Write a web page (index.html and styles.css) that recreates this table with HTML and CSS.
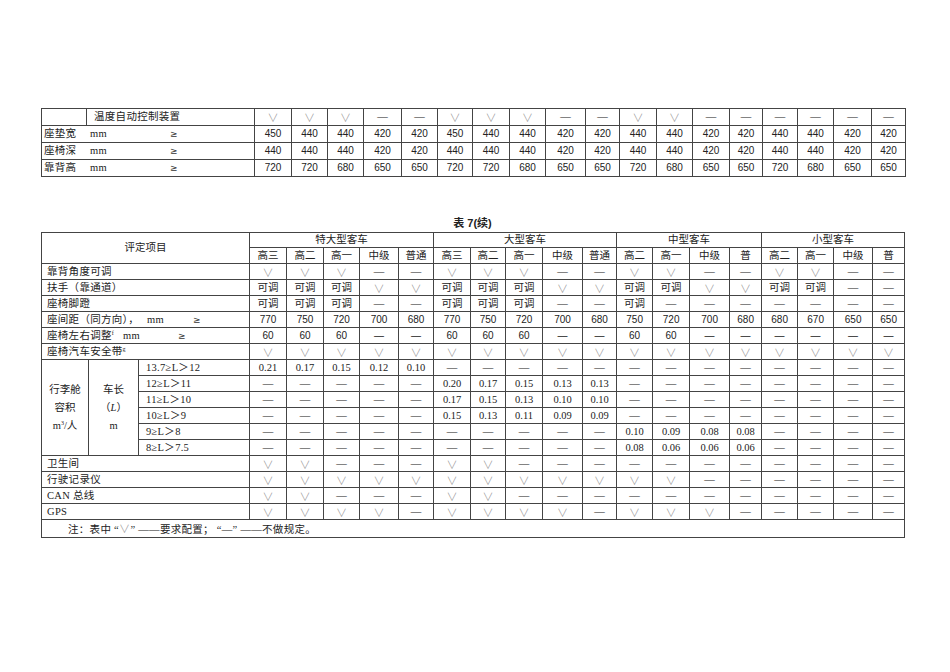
FILE: index.html
```html
<!DOCTYPE html>
<html lang="zh">
<head>
<meta charset="utf-8">
<title>表 7(续)</title>
<link rel="stylesheet" href="styles.css">
</head>
<body>
<div class="page">
<table class="grid top">
<colgroup>
<col style="width:45px"><col style="width:168px">
<col style="width:37px"><col style="width:36px"><col style="width:36px"><col style="width:38px"><col style="width:36px"><col style="width:35px"><col style="width:37px"><col style="width:36px"><col style="width:40px"><col style="width:34px"><col style="width:37px"><col style="width:36px"><col style="width:37px"><col style="width:33px"><col style="width:35px"><col style="width:36px"><col style="width:38px"><col style="width:34px">
</colgroup>
<tr><td></td><td class="lbl pad7">温度自动控制装置</td><td class="ck">∨</td><td class="ck">∨</td><td class="ck">∨</td><td>—</td><td>—</td><td class="ck">∨</td><td class="ck">∨</td><td class="ck">∨</td><td>—</td><td>—</td><td class="ck">∨</td><td class="ck">∨</td><td>—</td><td>—</td><td>—</td><td>—</td><td>—</td><td>—</td></tr>
<tr class="sans"><td colspan="2" class="lbl"><span class="nm">座垫宽</span><span class="mm">mm</span><span class="ge">≥</span></td><td>450</td><td>440</td><td>440</td><td>420</td><td>420</td><td>450</td><td>440</td><td>440</td><td>420</td><td>420</td><td>440</td><td>440</td><td>420</td><td>420</td><td>440</td><td>440</td><td>420</td><td>420</td></tr>
<tr class="sans"><td colspan="2" class="lbl"><span class="nm">座椅深</span><span class="mm">mm</span><span class="ge">≥</span></td><td>440</td><td>440</td><td>440</td><td>420</td><td>420</td><td>440</td><td>440</td><td>440</td><td>420</td><td>420</td><td>440</td><td>440</td><td>420</td><td>420</td><td>440</td><td>440</td><td>420</td><td>420</td></tr>
<tr class="sans"><td colspan="2" class="lbl"><span class="nm">靠背高</span><span class="mm">mm</span><span class="ge">≥</span></td><td>720</td><td>720</td><td>680</td><td>650</td><td>650</td><td>720</td><td>720</td><td>680</td><td>650</td><td>650</td><td>720</td><td>680</td><td>650</td><td>650</td><td>720</td><td>680</td><td>650</td><td>650</td></tr>
</table>

<div class="title">表 7(续)</div>

<table class="grid bottom">
<colgroup>
<col style="width:47px"><col style="width:50px"><col style="width:111px">
<col style="width:37px"><col style="width:37px"><col style="width:36px"><col style="width:39px"><col style="width:35px"><col style="width:37px"><col style="width:35px"><col style="width:37px"><col style="width:40px"><col style="width:34px"><col style="width:36px"><col style="width:37px"><col style="width:40px"><col style="width:32px"><col style="width:36px"><col style="width:36px"><col style="width:39px"><col style="width:32px">
</colgroup>
<tr class="h1"><td colspan="3" rowspan="2" class="head">评定项目</td><td colspan="5">特大型客车</td><td colspan="5">大型客车</td><td colspan="4">中型客车</td><td colspan="4">小型客车</td></tr>
<tr class="h2"><td>高三</td><td>高二</td><td>高一</td><td>中级</td><td>普通</td><td>高三</td><td>高二</td><td>高一</td><td>中级</td><td>普通</td><td>高二</td><td>高一</td><td>中级</td><td>普</td><td>高二</td><td>高一</td><td>中级</td><td>普</td></tr>
<tr><td colspan="3" class="lbl pad5">靠背角度可调</td><td class="ck">∨</td><td class="ck">∨</td><td class="ck">∨</td><td>—</td><td>—</td><td class="ck">∨</td><td class="ck">∨</td><td class="ck">∨</td><td>—</td><td>—</td><td class="ck">∨</td><td class="ck">∨</td><td>—</td><td>—</td><td class="ck">∨</td><td class="ck">∨</td><td>—</td><td>—</td></tr>
<tr><td colspan="3" class="lbl pad5">扶手（靠通道）</td><td>可调</td><td>可调</td><td>可调</td><td class="ck">∨</td><td class="ck">∨</td><td>可调</td><td>可调</td><td>可调</td><td class="ck">∨</td><td class="ck">∨</td><td>可调</td><td>可调</td><td class="ck">∨</td><td class="ck">∨</td><td>可调</td><td>可调</td><td>—</td><td>—</td></tr>
<tr><td colspan="3" class="lbl pad5">座椅脚蹬</td><td>可调</td><td>可调</td><td>可调</td><td>—</td><td>—</td><td>可调</td><td>可调</td><td>可调</td><td>—</td><td>—</td><td>可调</td><td>—</td><td>—</td><td>—</td><td>—</td><td>—</td><td>—</td><td>—</td></tr>
<tr class="sans"><td colspan="3" class="lbl pad5"><span class="w1">座间距（同方向），</span><span class="mm2">mm</span><span class="ge">≥</span></td><td>770</td><td>750</td><td>720</td><td>700</td><td>680</td><td>770</td><td>750</td><td>720</td><td>700</td><td>680</td><td>750</td><td>720</td><td>700</td><td>680</td><td>680</td><td>670</td><td>650</td><td>650</td></tr>
<tr class="sans"><td colspan="3" class="lbl pad5"><span class="w2">座椅左右调整<sup>f</sup></span><span class="mm3">mm</span><span class="ge">≥</span></td><td>60</td><td>60</td><td>60</td><td>—</td><td>—</td><td>60</td><td>60</td><td>60</td><td>—</td><td>—</td><td>60</td><td>60</td><td>—</td><td>—</td><td>—</td><td>—</td><td>—</td><td>—</td></tr>
<tr><td colspan="3" class="lbl pad5">座椅汽车安全带<sup>g</sup></td><td class="ck">∨</td><td class="ck">∨</td><td class="ck">∨</td><td class="ck">∨</td><td class="ck">∨</td><td class="ck">∨</td><td class="ck">∨</td><td class="ck">∨</td><td class="ck">∨</td><td class="ck">∨</td><td class="ck">∨</td><td class="ck">∨</td><td class="ck">∨</td><td class="ck">∨</td><td class="ck">∨</td><td class="ck">∨</td><td class="ck">∨</td><td class="ck">∨</td></tr>
<tr><td rowspan="6" class="stack">行李舱<br>容积<br>m<sup>3</sup>/人</td><td rowspan="6" class="stack">车长<br>（<i>L</i>）<br>m</td><td class="lbl pad7">13.7≥L＞12</td><td>0.21</td><td>0.17</td><td>0.15</td><td>0.12</td><td>0.10</td><td>—</td><td>—</td><td>—</td><td>—</td><td>—</td><td>—</td><td>—</td><td>—</td><td>—</td><td>—</td><td>—</td><td>—</td><td>—</td></tr>
<tr><td class="lbl pad7">12≥L＞11</td><td>—</td><td>—</td><td>—</td><td>—</td><td>—</td><td>0.20</td><td>0.17</td><td>0.15</td><td>0.13</td><td>0.13</td><td>—</td><td>—</td><td>—</td><td>—</td><td>—</td><td>—</td><td>—</td><td>—</td></tr>
<tr><td class="lbl pad7">11≥L＞10</td><td>—</td><td>—</td><td>—</td><td>—</td><td>—</td><td>0.17</td><td>0.15</td><td>0.13</td><td>0.10</td><td>0.10</td><td>—</td><td>—</td><td>—</td><td>—</td><td>—</td><td>—</td><td>—</td><td>—</td></tr>
<tr><td class="lbl pad7">10≥L＞9</td><td>—</td><td>—</td><td>—</td><td>—</td><td>—</td><td>0.15</td><td>0.13</td><td>0.11</td><td>0.09</td><td>0.09</td><td>—</td><td>—</td><td>—</td><td>—</td><td>—</td><td>—</td><td>—</td><td>—</td></tr>
<tr><td class="lbl pad7">9≥L＞8</td><td>—</td><td>—</td><td>—</td><td>—</td><td>—</td><td>—</td><td>—</td><td>—</td><td>—</td><td>—</td><td>0.10</td><td>0.09</td><td>0.08</td><td>0.08</td><td>—</td><td>—</td><td>—</td><td>—</td></tr>
<tr><td class="lbl pad7">8≥L＞7.5</td><td>—</td><td>—</td><td>—</td><td>—</td><td>—</td><td>—</td><td>—</td><td>—</td><td>—</td><td>—</td><td>0.08</td><td>0.06</td><td>0.06</td><td>0.06</td><td>—</td><td>—</td><td>—</td><td>—</td></tr>
<tr><td colspan="3" class="lbl pad5">卫生间</td><td class="ck">∨</td><td class="ck">∨</td><td>—</td><td>—</td><td>—</td><td class="ck">∨</td><td class="ck">∨</td><td>—</td><td>—</td><td>—</td><td>—</td><td>—</td><td>—</td><td>—</td><td>—</td><td>—</td><td>—</td><td>—</td></tr>
<tr><td colspan="3" class="lbl pad5">行驶记录仪</td><td class="ck">∨</td><td class="ck">∨</td><td class="ck">∨</td><td class="ck">∨</td><td class="ck">∨</td><td class="ck">∨</td><td class="ck">∨</td><td class="ck">∨</td><td class="ck">∨</td><td class="ck">∨</td><td class="ck">∨</td><td class="ck">∨</td><td>—</td><td>—</td><td>—</td><td>—</td><td>—</td><td>—</td></tr>
<tr><td colspan="3" class="lbl pad5">CAN 总线</td><td class="ck">∨</td><td class="ck">∨</td><td>—</td><td>—</td><td>—</td><td class="ck">∨</td><td class="ck">∨</td><td>—</td><td>—</td><td>—</td><td>—</td><td>—</td><td>—</td><td>—</td><td>—</td><td>—</td><td>—</td><td>—</td></tr>
<tr><td colspan="3" class="lbl pad5">GPS</td><td class="ck">∨</td><td class="ck">∨</td><td class="ck">∨</td><td class="ck">∨</td><td>—</td><td class="ck">∨</td><td class="ck">∨</td><td class="ck">∨</td><td class="ck">∨</td><td>—</td><td class="ck">∨</td><td class="ck">∨</td><td class="ck">∨</td><td>—</td><td>—</td><td>—</td><td>—</td><td>—</td></tr>
<tr class="note"><td colspan="21" class="lbl">注：表中 “<span class="ckc">∨</span>” ——要求配置； “—” ——不做规定。</td></tr>
</table>
</div>
</body>
</html>
```

FILE: styles.css
```css
html, body {
  margin: 0;
  padding: 0;
  background: #ffffff;
}
body {
  font-family: "Liberation Serif", "Noto Sans CJK SC", serif;
  font-size: 10.5px;
  color: #222;
}
.page {
  padding: 108px 0 0 41px;
}
.grid {
  border-collapse: collapse;
  table-layout: fixed;
}
.grid.top { width: 864px; }
.grid.bottom { width: 863px; }
.grid td {
  border: 1px solid #444;
  padding: 0;
  text-align: center;
  vertical-align: middle;
  white-space: nowrap;
  overflow: hidden;
  line-height: 12px;
}
.grid.top tr { height: 17px; }
.grid.bottom tr { height: 16px; }
.grid.bottom tr.h1 { height: 15px; }
.grid.bottom tr.note { height: 18px; }
.sans td {
  font-family: "Liberation Sans", "Noto Sans CJK SC", sans-serif;
  font-size: 10px;
}
.grid td.lbl {
  text-align: left;
  font-family: "Liberation Serif", "Noto Sans CJK SC", serif;
  font-size: 10.5px;
  letter-spacing: 0.3px;
}
.grid td.pad7 { padding-left: 7px; }
.grid td.pad5 { padding-left: 5px; }
.top td.lbl { padding-left: 2px; }
.top td.lbl.pad7 { padding-left: 7px; }
.nm { display: inline-block; width: 46px; }
.mm { display: inline-block; width: 80px; }
.w1 { display: inline-block; width: 100px; }
.mm2 { display: inline-block; width: 46px; }
.w2 { display: inline-block; width: 76px; }
.mm3 { display: inline-block; width: 55px; }
.ge { font-family: "DejaVu Sans", sans-serif; font-size: 9px; color: #333; }
.grid td.ck, .ckc {
  font-family: "Noto Sans CJK SC", sans-serif;
  font-size: 11px;
  font-weight: 300;
  color: #888;
}
sup {
  font-size: 6px;
  line-height: 0;
  vertical-align: 4px;
  font-family: "Liberation Serif", serif;
}
.grid td.stack {
  line-height: 18px;
  font-size: 10.5px;
}
.note td.lbl { padding-left: 26px; }
.title {
  width: 863px;
  margin: 39px 0 2px;
  height: 14px;
  line-height: 14px;
  text-align: center;
  font-family: "Liberation Sans", "Noto Sans CJK SC", sans-serif;
  font-weight: bold;
  font-size: 11px;
}
```
